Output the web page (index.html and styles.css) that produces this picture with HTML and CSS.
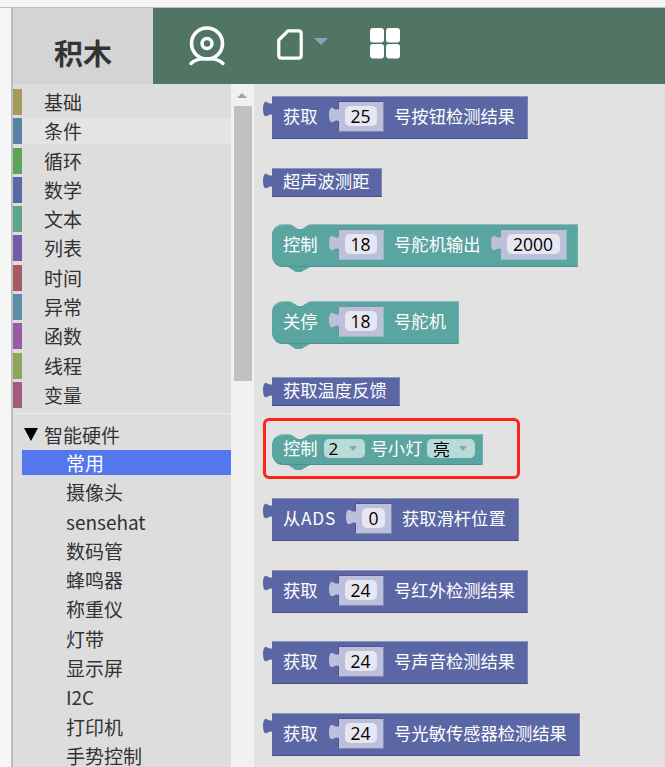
FILE: index.html
```html
<!DOCTYPE html>
<html lang="zh-CN">
<head>
<meta charset="utf-8">
<title>积木</title>
<link rel="stylesheet" href="styles.css">
</head>
<body>
<svg class="defs" width="0" height="0" aria-hidden="true">
  <symbol id="tab" viewBox="0 0 10 18" preserveAspectRatio="none">
    <path d="M10 0V2C8 3.5 6 2.5 4 1.2C2 0 0 2 0 8.5C0 15 2 17 4 15.8C6 14.5 8 13.5 10 15V18Z" fill="currentColor"/>
  </symbol>
</svg>
<div class="topstrip"></div>
<div class="app">
  <header class="header">
    <div class="tab-title">积木</div>
    <nav class="toolbar">
      <svg class="ico-cam" width="38" height="40" viewBox="0 0 38 40" fill="none" stroke="#fff">
        <circle cx="19" cy="17.5" r="15.5" stroke-width="3.6"/>
        <circle cx="19" cy="17.5" r="5" stroke-width="3.4"/>
        <path d="M3 37.5C9 31 29 31 35 37.5" stroke-width="3.4" stroke-linecap="round"/>
      </svg>
      <svg class="ico-doc" width="26" height="31" viewBox="0 0 26 31" fill="none" stroke="#fff" stroke-width="3.2" stroke-linejoin="round">
        <path d="M11 1.8H21.5Q24.2 1.8 24.2 4.5V26.5Q24.2 29.2 21.5 29.2H4.5Q1.8 29.2 1.8 26.5V11Z"/>
      </svg>
      <span class="caret"></span>
      <svg class="ico-grid" width="30" height="31" viewBox="0 0 30 31" fill="#fff">
        <rect x="0" y="0" width="14" height="14.5" rx="3"/>
        <rect x="16" y="0" width="14" height="14.5" rx="3"/>
        <rect x="0" y="16" width="14" height="14.5" rx="3"/>
        <rect x="16" y="16" width="14" height="14.5" rx="3"/>
      </svg>
    </nav>
  </header>
  <main class="main">
    <aside class="sidebar">
      <ul class="cats">
        <li class="cat"><i class="bar c1"></i>基础</li>
        <li class="cat hover"><i class="bar c2"></i>条件</li>
        <li class="cat"><i class="bar c3"></i>循环</li>
        <li class="cat"><i class="bar c4"></i>数学</li>
        <li class="cat"><i class="bar c5"></i>文本</li>
        <li class="cat"><i class="bar c6"></i>列表</li>
        <li class="cat"><i class="bar c7"></i>时间</li>
        <li class="cat"><i class="bar c8"></i>异常</li>
        <li class="cat"><i class="bar c9"></i>函数</li>
        <li class="cat"><i class="bar c10"></i>线程</li>
        <li class="cat"><i class="bar c11"></i>变量</li>
      </ul>
      <div class="tree-head"><span class="tree-arrow"></span>智能硬件</div>
      <ul class="tree">
        <li class="selected">常用</li>
        <li>摄像头</li>
        <li>sensehat</li>
        <li>数码管</li>
        <li>蜂鸣器</li>
        <li>称重仪</li>
        <li>灯带</li>
        <li>显示屏</li>
        <li>I2C</li>
        <li>打印机</li>
        <li>手势控制</li>
      </ul>
    </aside>
    <div class="scrollbar"><span class="scroll-up"></span><span class="scroll-thumb"></span></div>
    <section class="workspace">
      <div class="block purple tall gap29">
        <svg class="out-tab"><use href="#tab"/></svg>
        <span>获取</span>
        <div class="socket"><svg class="in-tab"><use href="#tab"/></svg><b class="num">25</b></div>
        <span>号按钮检测结果</span>
      </div>
      <div class="block purple short gap27">
        <svg class="out-tab"><use href="#tab"/></svg>
        <span>超声波测距</span>
      </div>
      <div class="block teal tall gap34">
        <span>控制</span>
        <div class="socket"><svg class="in-tab"><use href="#tab"/></svg><b class="num">18</b></div>
        <span>号舵机输出</span>
        <div class="socket wide"><svg class="in-tab"><use href="#tab"/></svg><b class="num">2000</b></div>
      </div>
      <div class="block teal tall gap33">
        <span>关停</span>
        <div class="socket"><svg class="in-tab"><use href="#tab"/></svg><b class="num">18</b></div>
        <span>号舵机</span>
      </div>
      <div class="block purple short gap28">
        <svg class="out-tab"><use href="#tab"/></svg>
        <span>获取温度反馈</span>
      </div>
      <div class="block teal dropdowns gap33">
        <span>控制</span>
        <div class="drop d-num">2<i class="drop-arrow"></i></div>
        <span>号小灯</span>
        <div class="drop d-state">亮<i class="drop-arrow"></i></div>
      </div>
      <div class="block purple tall gap29">
        <svg class="out-tab"><use href="#tab"/></svg>
        <span class="ads">从ADS</span>
        <div class="socket narrow"><svg class="in-tab"><use href="#tab"/></svg><b class="num">0</b></div>
        <span>获取滑杆位置</span>
      </div>
      <div class="block purple tall gap28">
        <svg class="out-tab"><use href="#tab"/></svg>
        <span>获取</span>
        <div class="socket"><svg class="in-tab"><use href="#tab"/></svg><b class="num">24</b></div>
        <span>号红外检测结果</span>
      </div>
      <div class="block purple tall gap29">
        <svg class="out-tab"><use href="#tab"/></svg>
        <span>获取</span>
        <div class="socket"><svg class="in-tab"><use href="#tab"/></svg><b class="num">24</b></div>
        <span>号声音检测结果</span>
      </div>
      <div class="block purple tall">
        <svg class="out-tab"><use href="#tab"/></svg>
        <span>获取</span>
        <div class="socket"><svg class="in-tab"><use href="#tab"/></svg><b class="num">24</b></div>
        <span>号光敏传感器检测结果</span>
      </div>
      <div class="highlight"></div>
    </section>
  </main>
</div>
</body>
</html>
```
FILE: styles.css
```css
* { box-sizing: border-box; }
html, body { height: 100%; margin: 0; overflow: hidden; }
body {
  background: #f6f6f6;
  color: #333;
  font-family: "Noto Sans CJK SC", "Open Sans", sans-serif;
}
ul { list-style: none; margin: 0; padding: 0; }
.defs { position: absolute; }

.topstrip { height: 8px; border-bottom: 1px solid #bdbdbd; }
.app {
  margin-left: 11px;
  border-left: 2px solid #bdbdbd;
  height: 759px;
  display: flex;
  flex-direction: column;
}

/* header */
.header { height: 76px; display: flex; flex: none; }
.tab-title {
  width: 140px;
  background: #d4d4d4;
  font-size: 29px;
  font-weight: 700;
  line-height: 62px;
  padding-top: 13px;
  text-align: center;
  color: #333;
}
.toolbar {
  flex: 1;
  background: #507565;
  display: flex;
  align-items: flex-start;
}
.ico-cam { margin: 18px 0 0 35px; }
.ico-doc { margin: 21px 0 0 51px; }
.caret {
  margin: 30px 0 0 11px;
  border-left: 7px solid transparent;
  border-right: 7px solid transparent;
  border-top: 7px solid #8fa3b8;
}
.ico-grid { margin: 20px 0 0 42px; }

/* main area */
.main { flex: 1; display: flex; min-height: 0; }
.sidebar {
  width: 218px;
  background: #dddddd;
  padding-top: 5px;
  font-size: 19px;
  overflow: hidden;
}
.cats { border-bottom: 1px solid #eeeeee; padding-bottom: 5px; }
.cat {
  height: 26px;
  margin-bottom: 3.3px;
  display: flex;
  align-items: center;
  line-height: 28px;
}
.cat:last-child { margin-bottom: 0; }
.cat.hover { background: #e4e4e4; }
.bar { width: 9px; height: 26px; margin-right: 22px; flex: none; }
.c1 { background: #a59a5e; }
.c2 { background: #5b80a5; }
.c3 { background: #5ba55b; }
.c4 { background: #5b67a5; }
.c5 { background: #5ba58c; }
.c6 { background: #745ba5; }
.c7 { background: #a55b5f; }
.c8 { background: #5b8da5; }
.c9 { background: #9a5ba5; }
.c10 { background: #8fa55b; }
.c11 { background: #a55b80; }

.tree-head {
  height: 26px;
  margin-top: 8px;
  display: flex;
  align-items: center;
  line-height: 26px;
}
.tree-arrow {
  margin: 0 6px 0 11px;
  border-left: 7.5px solid transparent;
  border-right: 7.5px solid transparent;
  border-top: 13px solid #000;
}
.tree { margin-left: 9px; margin-top: 2px; }
.tree li {
  height: 29.3px;
  line-height: 26px;
  padding-left: 44px;
  white-space: nowrap;
}
.tree li.selected {
  height: 25px;
  margin-bottom: 4.3px;
  background: #5577ee;
  color: #fff;
}

.scrollbar { width: 23px; background: #f1f1f1; position: relative; padding-top: 22px; display: flex; justify-content: center; align-items: flex-start; }
.scroll-up {
  position: absolute;
  top: 9px;
  left: 6px;
  border-left: 5px solid transparent;
  border-right: 5px solid transparent;
  border-bottom: 5px solid #a3a3a3;
}
.scroll-thumb { width: 18px; height: 275px; background: #c1c1c1; }

/* workspace blocks */
.workspace {
  flex: 1;
  position: relative;
  background: #e2e2e2;
  padding: 12px 0 0 18px;
  display: flex;
  flex-direction: column;
  align-items: flex-start;
  overflow: hidden;
}
.gap27 { margin-bottom: 27px; }
.gap28 { margin-bottom: 28px; }
.gap29 { margin-bottom: 29px; }
.gap33 { margin-bottom: 33px; }
.gap34 { margin-bottom: 34px; }

.block {
  position: relative;
  display: flex;
  align-items: center;
  flex: none;
  padding: 0 12px 0 10px;
  font-size: 17.3px;
  color: #fff;
  white-space: nowrap;
  border-style: solid;
  border-width: 1px;
}
.block > span { line-height: 20px; position: relative; top: -2px; }
.block > .ads { letter-spacing: 0.75px; }
.purple { background: #5b67a5; border-color: #8d94c0 #7d84b5 #484f85 #5b67a5; }
.teal { background: #5ba5a1; border-color: #8cc0bd #70b0ac #4f8f8b #5ba5a1; border-radius: 11px 0 0 11px; }
.tall { height: 43px; }
.short { height: 29px; }
.dropdowns { height: 31px; padding-right: 7px; }

.teal::before {
  content: "";
  position: absolute;
  top: -1px;
  left: 17px;
  width: 20px;
  height: 5px;
  background: #e2e2e2;
  clip-path: polygon(0 0, 100% 0, 60% 100%, 40% 100%);
}
.teal::after {
  content: "";
  position: absolute;
  bottom: -6px;
  left: 15px;
  width: 22px;
  height: 5px;
  background: #5ba5a1;
  clip-path: polygon(0 0, 100% 0, 60% 100%, 35% 100%);
}

.out-tab {
  position: absolute;
  left: -10px;
  top: 4px;
  width: 10px;
  height: 17px;
  color: #5b67a5;
}
.socket {
  position: relative;
  width: 46px;
  height: 31px;
  margin: -3px 10.5px 0 20px;
  background: #bcc0da;
  border: 1px solid;
  border-color: #4d5590 #8288b5 #8288b5 #4d5590;
  display: flex;
  align-items: center;
  justify-content: center;
}
.teal .socket { border-color: #6f96a0 #8cc0bd #8cc0bd #6f96a0; }
.socket.wide { width: 67px; margin: -3px -2px 0 19px; }
.socket.narrow { width: 37px; margin: -3px 10px 0 19px; }
.in-tab {
  position: absolute;
  left: -10px;
  top: 5px;
  width: 10px;
  height: 17px;
  color: #bcc0da;
}
.num {
  flex: 1;
  height: 20px;
  margin: 0 6px;
  border-radius: 5px;
  background: #e6e7f1;
  color: #000;
  font-family: "Open Sans", sans-serif;
  font-weight: 400;
  font-size: 17.5px;
  line-height: 20px;
  text-align: center;
}
.drop {
  position: relative;
  height: 19px;
  top: -1px;
  border-radius: 5px;
  background: #b9dbd7;
  color: #000;
  font-size: 17px;
  line-height: 19px;
  padding-left: 5px;
}
.d-num { width: 41px; margin: 0 6px; font-family: "Open Sans", sans-serif; }
.d-state { width: 48px; margin-left: 4.5px; padding-left: 6px; }
.drop-arrow {
  position: absolute;
  right: 8px;
  top: 7px;
  border-left: 4px solid transparent;
  border-right: 4px solid transparent;
  border-top: 5px solid #8aa9a6;
}

.highlight {
  position: absolute;
  left: 9px;
  top: 334px;
  width: 257px;
  height: 61px;
  border: 3px solid #fd2318;
  border-radius: 6px;
}
```
